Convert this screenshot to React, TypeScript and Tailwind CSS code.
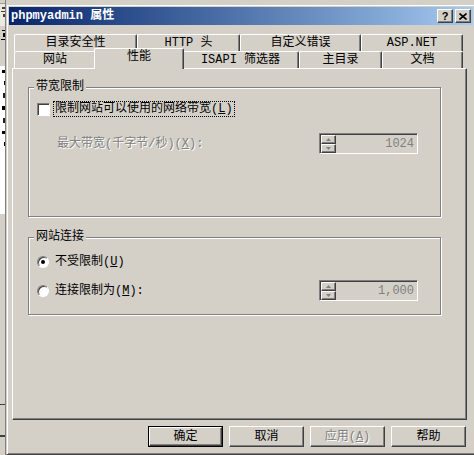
import type { ReactNode } from "react"

const raised =
    "border border-t-white border-l-white border-r-[#404040] border-b-[#404040] shadow-[inset_-1px_-1px_0_#808080]"
const sunken =
    "border border-t-[#808080] border-l-[#808080] border-r-white border-b-white shadow-[inset_1px_1px_0_#404040]"
const disabledText = "text-[#808080] [text-shadow:1px_1px_0_#fff]"

// bits of the window behind the dialog
const LeftStrip = () => (
    <div className="w-[6px] h-[455px] shrink-0 flex flex-col border-r border-[#808080] overflow-hidden">
        <div className="h-[4px] bg-[#d4d0c8] border-b border-[#a0a0a0]" />
        <div className="h-[22px] bg-[#ece9e0] flex flex-col items-end gap-[2px] pt-[3px]">
            <div className="w-[3px] h-[2px] bg-[#404040]" />
            <div className="w-[4px] h-[1px] bg-[#404040]" />
            <div className="w-[2px] h-[3px] bg-[#404040]" />
        </div>
        <div className="h-[40px] bg-[#d4d0c8] flex flex-col items-end gap-[2px] pt-[4px]">
            <div className="w-[3px] h-[1px] bg-black" />
            <div className="w-[2px] h-[4px] bg-black" />
            <div className="w-[4px] h-[1px] bg-black" />
        </div>
        <div className="h-[148px] bg-white flex flex-col items-end gap-[8px] pt-[4px]">
            <div className="w-[3px] h-[3px] bg-black" />
            <div className="w-[1px] h-[4px] bg-black" />
            <div className="w-[2px] h-[5px] bg-[#202020]" />
            <div className="w-[3px] h-[4px] bg-black" />
            <div className="w-[2px] h-[5px] bg-[#202020]" />
            <div className="w-[3px] h-[3px] bg-black" />
            <div className="w-[1px] h-[4px] bg-black" />
        </div>
        <div className="flex-1 bg-[#d4d0c8] flex flex-col justify-end pb-[18px] gap-[30px]">
            <div className="h-px bg-[#404040]" />
            <div className="h-[2px] border-y border-[#404040]" />
        </div>
    </div>
)

const TitleButton = ({ children }: { children: ReactNode }) => (
    <div className={`w-[16px] h-[14px] bg-[#d4d0c8] flex items-center justify-center ${raised}`}>{children}</div>
)

const Tab = ({ label, width }: { label: ReactNode; width: string }) => (
    <div
        className={`${width} h-[17px] shrink-0 flex items-center justify-center bg-[#d4d0c8] border-l border-t border-white border-r border-r-[#404040] shadow-[inset_-1px_0_0_#808080] rounded-tl-[2px] rounded-tr-[2px]`}
    >
        {label}
    </div>
)

const SpinBtn = ({ up }: { up?: boolean }) => (
    <div className={`flex-1 bg-[#d4d0c8] flex items-center justify-center ${raised}`}>
        <svg width="5" height="3" viewBox="0 0 5 3">
            {up ? <path d="M2.5 0 L5 3 L0 3 Z" fill="#808080" /> : <path d="M0 0 L5 0 L2.5 3 Z" fill="#808080" />}
        </svg>
    </div>
)

const SpinBox = ({ value }: { value: string }) => (
    <div className={`w-[99px] h-[21px] shrink-0 flex pl-[1px] pt-[1px] bg-[#d4d0c8] ${sunken}`}>
        <div className="w-[15px] flex flex-col">
            <SpinBtn up />
            <SpinBtn />
        </div>
        <div className="flex-1 flex items-center justify-end pr-[3px] text-[#808080]">{value}</div>
    </div>
)

const GroupBox = ({ title, height, children }: { title: string; height: string; children: ReactNode }) => (
    <div className={`relative ${height} border border-[#808080] shadow-[inset_1px_1px_0_#fff,1px_1px_0_#fff]`}>
        <div className="absolute -top-[8px] left-[5px] bg-[#d4d0c8] px-[2px]">{title}</div>
        {children}
    </div>
)

const Radio = ({ checked }: { checked?: boolean }) => (
    <div
        className={`w-[12px] h-[12px] shrink-0 rounded-full bg-white flex items-center justify-center ${sunken}`}
    >
        {checked && <div className="w-[4px] h-[4px] rounded-full bg-black" />}
    </div>
)

const DialogButton = ({ children, isDefault, disabled }: { children: ReactNode; isDefault?: boolean; disabled?: boolean }) => (
    <div className={`w-[75px] h-[21px] ${isDefault ? "border border-black" : ""}`}>
        <div
            className={`w-full h-full flex items-center justify-center bg-[#d4d0c8] ${raised} ${disabled ? disabledText : ""}`}
        >
            {children}
        </div>
    </div>
)

export default function App() {
    return (
        <div className="w-[474px] h-[455px] overflow-hidden bg-[#d4d0c8] flex text-[12px] leading-[14px] text-black [font-family:'Liberation_Mono','Noto_Sans_CJK_SC',monospace]">
            <LeftStrip />

            <div className="mt-[4px] w-[470px] shrink-0 border border-t-[#d4d0c8] border-l-[#d4d0c8] border-r-[#404040] border-b-[#404040] shadow-[inset_1px_1px_0_#fff,inset_-1px_-1px_0_#808080] p-[2px]">
                {/* title bar */}
                <div className="h-[18px] flex items-center justify-between bg-linear-to-r from-[#0a246a] to-[#a6caf0] pl-[2px] pr-[2px]">
                    <span className="text-white font-bold">phpmyadmin 属性</span>
                    <div className="flex gap-[2px]">
                        <TitleButton>
                            <span className="font-bold text-[11px] leading-[11px] [font-family:'Liberation_Sans',sans-serif]">?</span>
                        </TitleButton>
                        <TitleButton>
                            <svg width="8" height="7" viewBox="0 0 8 7">
                                <path d="M0.5 0.5 L7.5 6.5 M7.5 0.5 L0.5 6.5" stroke="#000" strokeWidth="1.6" />
                            </svg>
                        </TitleButton>
                    </div>
                </div>

                <div className="ml-[3px] w-[455px] mt-[9px]">
                    {/* tabs */}
                    <div className="ml-[2px] w-[449px] flex flex-col">
                        <div className="flex">
                            <Tab width="w-[123px]" label="目录安全性" />
                            <Tab width="w-[103px]" label="HTTP 头" />
                            <Tab width="w-[121px]" label="自定义错误" />
                            <Tab width="w-[102px]" label="ASP.NET" />
                        </div>
                        <div className="flex items-end h-[17px]">
                            <Tab width="w-[82px]" label="网站" />
                            <div className="relative z-10 w-[90px] h-[21px] -mx-[2px] -mb-[1px] shrink-0 flex items-center justify-center pb-[4px] bg-[#d4d0c8] border-l border-t border-white border-r border-r-[#404040] shadow-[inset_-1px_0_0_#808080] rounded-tl-[2px] rounded-tr-[2px]">
                                性能
                            </div>
                            <Tab width="w-[117px]" label="ISAPI 筛选器" />
                            <Tab width="w-[83px]" label="主目录" />
                            <Tab width="w-[81px]" label="文档" />
                        </div>
                    </div>

                    {/* panel */}
                    <div className={`h-[352px] pl-[15px] pr-[25px] pt-[18px] flex flex-col ${raised}`}>
                        <GroupBox title="带宽限制" height="h-[130px]">
                            <div className="mt-[13px] ml-[8px] flex items-center gap-[3px]">
                                <div className={`w-[13px] h-[13px] bg-white ${sunken}`} />
                                <div className="h-[16px] flex items-center border border-dotted border-black px-[1px]">
                                    限制网站可以使用的网络带宽(<span className="underline">L</span>)
                                </div>
                            </div>
                            <div className="mt-[16px] pl-[28px] pr-[22px] flex items-center justify-between">
                                <span className={disabledText}>
                                    最大带宽(千字节/秒)(<span className="underline">X</span>):
                                </span>
                                <SpinBox value="1024" />
                            </div>
                        </GroupBox>

                        <div className="mt-[20px]">
                            <GroupBox title="网站连接" height="h-[78px]">
                                <div className="mt-[17px] ml-[8px] flex items-center gap-[6px] h-[14px]">
                                    <Radio checked />
                                    <span>
                                        不受限制(<span className="underline">U</span>)
                                    </span>
                                </div>
                                <div className="mt-[11px] pl-[8px] pr-[22px] flex items-center h-[21px]">
                                    <Radio />
                                    <span className="ml-[6px] flex-1">
                                        连接限制为(<span className="underline">M</span>):
                                    </span>
                                    <SpinBox value="1,000" />
                                </div>
                            </GroupBox>
                        </div>
                    </div>

                    {/* buttons */}
                    <div className="mt-[6px] pr-[1px] flex justify-end gap-[6px]">
                        <DialogButton isDefault>确定</DialogButton>
                        <DialogButton>取消</DialogButton>
                        <DialogButton disabled>
                            应用(<span className="underline">A</span>)
                        </DialogButton>
                        <DialogButton>帮助</DialogButton>
                    </div>
                </div>
            </div>
        </div>
    )
}
